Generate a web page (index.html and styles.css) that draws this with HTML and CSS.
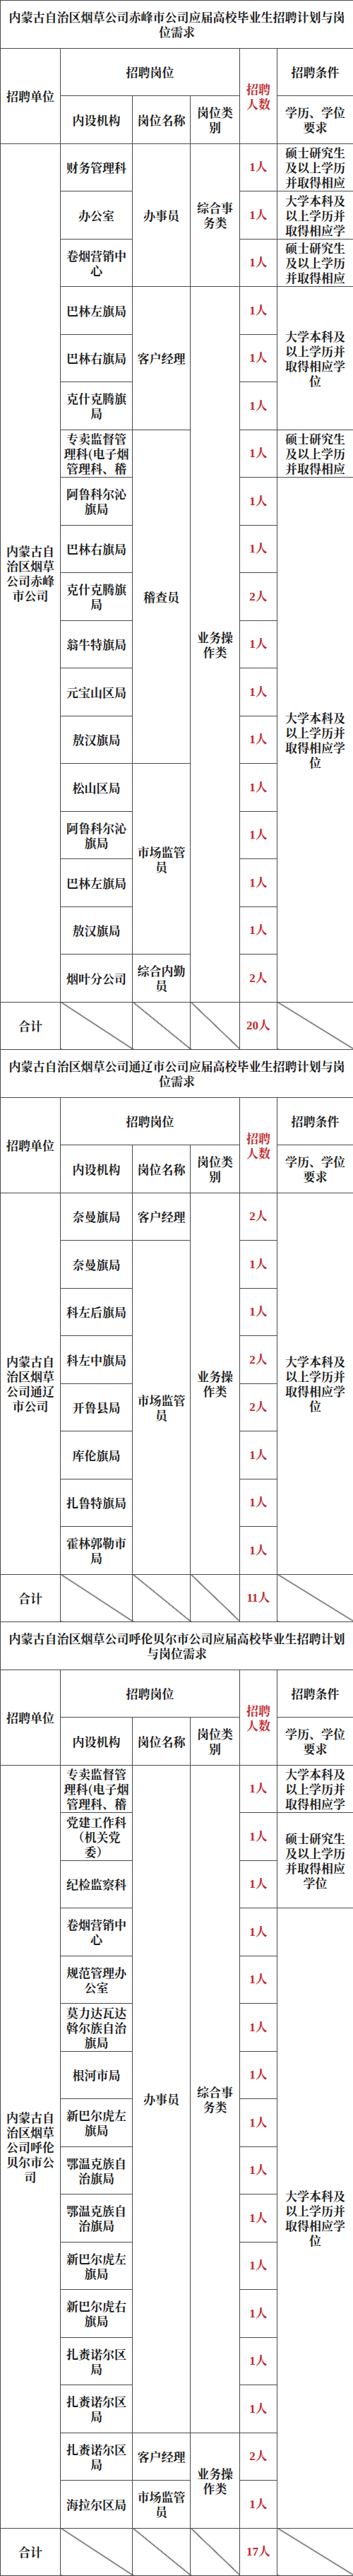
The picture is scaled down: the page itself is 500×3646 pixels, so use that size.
FILE: index.html
```html
<!DOCTYPE html>
<html lang="zh-CN">
<head>
<meta charset="utf-8">
<title>应届高校毕业生招聘计划与岗位需求</title>
<link rel="stylesheet" href="styles.css">
</head>
<body>
<table class="plan">
<colgroup><col class="c1"><col class="c2"><col class="c3"><col class="c4"><col class="c5"><col class="c6"></colgroup>
<tbody>
<tr><td colspan="6" class="title">内蒙古自治区烟草公司赤峰市公司应届高校毕业生招聘计划与岗位需求</td></tr>
<tr><td rowspan="2">招聘单位</td><td colspan="3">招聘岗位</td><td rowspan="2" class="red">招聘人数</td><td>招聘条件</td></tr>
<tr><td>内设机构</td><td>岗位名称</td><td>岗位类别</td><td>学历、学位要求</td></tr>
<tr><td rowspan="18">内蒙古自治区烟草公司赤峰市公司</td><td>财务管理科</td><td rowspan="3">办事员</td><td rowspan="3">综合事务类</td><td class="red num">1人</td><td><div class="clip">硕士研究生及以上学历并取得相应学位</div></td></tr>
<tr><td>办公室</td><td class="red num">1人</td><td><div class="clip">大学本科及以上学历并取得相应学位</div></td></tr>
<tr><td>卷烟营销中心</td><td class="red num">1人</td><td><div class="clip">硕士研究生及以上学历并取得相应学位</div></td></tr>
<tr><td>巴林左旗局</td><td rowspan="3">客户经理</td><td rowspan="15">业务操作类</td><td class="red num">1人</td><td rowspan="3">大学本科及以上学历并取得相应学位</td></tr>
<tr><td>巴林右旗局</td><td class="red num">1人</td></tr>
<tr><td>克什克腾旗局</td><td class="red num">1人</td></tr>
<tr><td><div class="clip">专卖监督管理科(电子烟管理科、稽查支队)</div></td><td rowspan="7">稽查员</td><td class="red num">1人</td><td><div class="clip">硕士研究生及以上学历并取得相应学位</div></td></tr>
<tr><td>阿鲁科尔沁旗局</td><td class="red num">1人</td><td rowspan="11">大学本科及以上学历并取得相应学位</td></tr>
<tr><td>巴林右旗局</td><td class="red num">1人</td></tr>
<tr><td>克什克腾旗局</td><td class="red num">2人</td></tr>
<tr><td>翁牛特旗局</td><td class="red num">1人</td></tr>
<tr><td>元宝山区局</td><td class="red num">1人</td></tr>
<tr><td>敖汉旗局</td><td class="red num">1人</td></tr>
<tr><td>松山区局</td><td rowspan="4">市场监管员</td><td class="red num">1人</td></tr>
<tr><td>阿鲁科尔沁旗局</td><td class="red num">1人</td></tr>
<tr><td>巴林左旗局</td><td class="red num">1人</td></tr>
<tr><td>敖汉旗局</td><td class="red num">1人</td></tr>
<tr><td>烟叶分公司</td><td>综合内勤员</td><td class="red num">2人</td></tr>
<tr><td>合计</td><td class="diag"></td><td class="diag"></td><td class="diag"></td><td class="red num">20人</td><td class="diag"></td></tr>

<tr><td colspan="6" class="title">内蒙古自治区烟草公司通辽市公司应届高校毕业生招聘计划与岗位需求</td></tr>
<tr><td rowspan="2">招聘单位</td><td colspan="3">招聘岗位</td><td rowspan="2" class="red">招聘人数</td><td>招聘条件</td></tr>
<tr><td>内设机构</td><td>岗位名称</td><td>岗位类别</td><td>学历、学位要求</td></tr>
<tr><td rowspan="8">内蒙古自治区烟草公司通辽市公司</td><td>奈曼旗局</td><td>客户经理</td><td rowspan="8">业务操作类</td><td class="red num">2人</td><td rowspan="8">大学本科及以上学历并取得相应学位</td></tr>
<tr><td>奈曼旗局</td><td rowspan="7">市场监管员</td><td class="red num">1人</td></tr>
<tr><td>科左后旗局</td><td class="red num">1人</td></tr>
<tr><td>科左中旗局</td><td class="red num">2人</td></tr>
<tr><td>开鲁县局</td><td class="red num">2人</td></tr>
<tr><td>库伦旗局</td><td class="red num">1人</td></tr>
<tr><td>扎鲁特旗局</td><td class="red num">1人</td></tr>
<tr><td>霍林郭勒市局</td><td class="red num">1人</td></tr>
<tr><td>合计</td><td class="diag"></td><td class="diag"></td><td class="diag"></td><td class="red num">11人</td><td class="diag"></td></tr>

<tr><td colspan="6" class="title">内蒙古自治区烟草公司呼伦贝尔市公司应届高校毕业生招聘计划与岗位需求</td></tr>
<tr><td rowspan="2">招聘单位</td><td colspan="3">招聘岗位</td><td rowspan="2" class="red">招聘人数</td><td>招聘条件</td></tr>
<tr><td>内设机构</td><td>岗位名称</td><td>岗位类别</td><td>学历、学位要求</td></tr>
<tr><td rowspan="16">内蒙古自治区烟草公司呼伦贝尔市公司</td><td><div class="clip">专卖监督管理科(电子烟管理科、稽查支队)</div></td><td rowspan="14">办事员</td><td rowspan="14">综合事务类</td><td class="red num">1人</td><td><div class="clip">大学本科及以上学历并取得相应学位</div></td></tr>
<tr><td>党建工作科（机关党委）</td><td class="red num">1人</td><td rowspan="2">硕士研究生及以上学历并取得相应学位</td></tr>
<tr><td>纪检监察科</td><td class="red num">1人</td></tr>
<tr><td>卷烟营销中心</td><td class="red num">1人</td><td rowspan="13">大学本科及以上学历并取得相应学位</td></tr>
<tr><td>规范管理办公室</td><td class="red num">1人</td></tr>
<tr><td>莫力达瓦达斡尔族自治旗局</td><td class="red num">1人</td></tr>
<tr><td>根河市局</td><td class="red num">1人</td></tr>
<tr><td>新巴尔虎左旗局</td><td class="red num">1人</td></tr>
<tr><td>鄂温克族自治旗局</td><td class="red num">1人</td></tr>
<tr><td>鄂温克族自治旗局</td><td class="red num">1人</td></tr>
<tr><td>新巴尔虎左旗局</td><td class="red num">1人</td></tr>
<tr><td>新巴尔虎右旗局</td><td class="red num">1人</td></tr>
<tr><td>扎赉诺尔区局</td><td class="red num">1人</td></tr>
<tr><td>扎赉诺尔区局</td><td class="red num">1人</td></tr>
<tr><td>扎赉诺尔区局</td><td>客户经理</td><td rowspan="2">业务操作类</td><td class="red num">2人</td></tr>
<tr><td>海拉尔区局</td><td>市场监管员</td><td class="red num">1人</td></tr>
<tr><td>合计</td><td class="diag"></td><td class="diag"></td><td class="diag"></td><td class="red num">17人</td><td class="diag"></td></tr>
</tbody>
</table>
</body>
</html>
```

FILE: styles.css
```css
html, body {
  margin: 0;
  padding: 0;
  background: #ffffff;
}

body {
  font-family: "Noto Serif CJK SC", "Noto Sans CJK SC", serif;
  color: #1c1c1c;
}

.plan {
  width: 500px;
  border-collapse: collapse;
  table-layout: fixed;
}

.c1 { width: 85px; }
.c2 { width: 102px; }
.c3 { width: 82px; }
.c4 { width: 70px; }
.c5 { width: 53px; }
.c6 { width: 108px; }

.plan tr {
  height: 67.5px;
}

.plan td {
  border: 1px solid #4a4a4a;
  padding: 0 4px;
  text-align: center;
  vertical-align: middle;
  font-size: 17px;
  line-height: 21px;
  font-weight: 700;
}

.plan td.title {
  padding: 0 6px;
}

.clip {
  max-height: 63px;
  overflow: hidden;
}

.red {
  color: #c0282d;
}

.num {
  font-family: "Liberation Serif", "Noto Serif CJK SC", "Noto Sans CJK SC", serif;
}

.diag {
  background: linear-gradient(to top right,
    transparent calc(50% - 0.9px),
    #4a4a4a calc(50% - 0.4px),
    #4a4a4a calc(50% + 0.4px),
    transparent calc(50% + 0.9px));
}
```
